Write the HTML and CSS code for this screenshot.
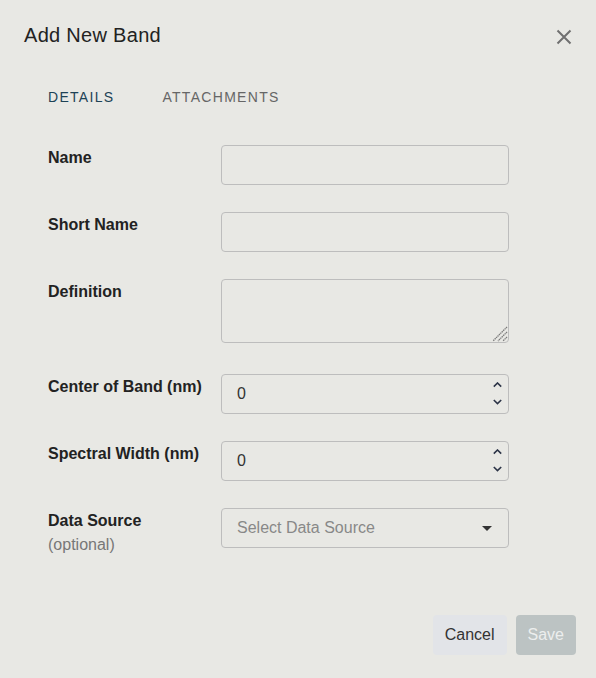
FILE: index.html
```html
<!DOCTYPE html>
<html lang="en">
<head>
    <meta charset="UTF-8">
    <meta name="viewport" content="width=device-width, initial-scale=1.0">
    <title>Add New Band</title>
    <link rel="stylesheet" href="styles.css">
</head>
<body>
    <div class="modal">
        <div class="header">
            <div class="title">Add New Band</div>
            <button class="close" aria-label="Close">
                <svg width="16" height="16" viewBox="0 0 16 16">
                    <path d="M1.5 1.5 L14.5 14.5 M14.5 1.5 L1.5 14.5" stroke="#707070" stroke-width="2" fill="none"/>
                </svg>
            </button>
        </div>

        <div class="tabs">
            <div class="tab active">DETAILS</div>
            <div class="tab">ATTACHMENTS</div>
        </div>

        <div class="form">
            <label class="label">Name</label>
            <div class="field"><input type="text" class="text-input"></div>

            <label class="label">Short Name</label>
            <div class="field"><input type="text" class="text-input"></div>

            <label class="label">Definition</label>
            <div class="textarea-wrap">
                <textarea class="textarea"></textarea>
                <svg class="grip" width="16" height="16" viewBox="0 0 16 16">
                    <path d="M15 1 L1 15 M15 6 L6 15 M15 11 L11 15" stroke="#7a7a7a" stroke-width="1.3" stroke-dasharray="1.4 0.6" fill="none"/>
                </svg>
            </div>

            <label class="label">Center of Band (nm)</label>
            <div class="field">
                <input type="text" class="text-input" value="0">
                <svg class="spinner" width="9" height="24" viewBox="0 0 9 24">
                    <path d="M0.8 4.6 L4.5 1 L8.2 4.6" stroke="#2c3447" stroke-width="1.6" fill="none"/>
                    <path d="M0.8 18 L4.5 21.6 L8.2 18" stroke="#2c3447" stroke-width="1.6" fill="none"/>
                </svg>
            </div>

            <label class="label">Spectral Width (nm)</label>
            <div class="field">
                <input type="text" class="text-input" value="0">
                <svg class="spinner" width="9" height="24" viewBox="0 0 9 24">
                    <path d="M0.8 4.6 L4.5 1 L8.2 4.6" stroke="#2c3447" stroke-width="1.6" fill="none"/>
                    <path d="M0.8 18 L4.5 21.6 L8.2 18" stroke="#2c3447" stroke-width="1.6" fill="none"/>
                </svg>
            </div>

            <label class="label">Data Source<span class="optional">(optional)</span></label>
            <div class="field select">
                <span class="placeholder">Select Data Source</span>
                <svg class="caret" width="10" height="5" viewBox="0 0 10 5">
                    <path d="M0 0 L10 0 L5 5 Z" fill="#333"/>
                </svg>
            </div>
        </div>

        <div class="footer">
            <button class="btn btn-cancel">Cancel</button>
            <button class="btn btn-save" disabled>Save</button>
        </div>
    </div>
</body>
</html>
```

FILE: styles.css
```css
body {
    margin: 0;
    width: 596px;
    height: 678px;
    background-color: #e8e8e4;
    font-family: "Liberation Sans", Arial, sans-serif;
    color: #222;
    overflow: hidden;
}
.modal {
    display: flex;
    flex-direction: column;
    height: 100%;
    box-sizing: border-box;
    padding: 23px 20px 23px 24px;
}
.header {
    display: flex;
    justify-content: space-between;
    align-items: center;
    height: 24px;
}
.title {
    font-size: 20px;
    line-height: 24px;
    letter-spacing: 0.3px;
    color: #222;
}
.close {
    border: none;
    background: none;
    padding: 0;
    margin-right: 4px;
    margin-top: 4px;
    width: 16px;
    height: 16px;
    cursor: pointer;
}
.tabs {
    display: flex;
    margin-top: 40px;
}
.tab {
    padding: 0 24px;
    font-size: 14px;
    line-height: 20px;
    letter-spacing: 1.3px;
    color: #666;
}
.tab.active {
    color: #1d4256;
}
.form {
    display: grid;
    grid-template-columns: 173px 288px;
    row-gap: 27px;
    margin-top: 38px;
    padding-left: 24px;
}
.label {
    display: flex;
    flex-direction: column;
    padding-top: 1px;
    font-size: 16px;
    line-height: 24px;
    font-weight: bold;
    color: #222;
}
.optional {
    font-weight: normal;
    color: #777;
}
.field {
    display: flex;
    align-items: center;
    height: 40px;
    box-sizing: border-box;
    border: 1px solid #bdbdbd;
    border-radius: 4px;
    padding: 0 6px 0 15px;
}
.text-input {
    flex: 1;
    min-width: 0;
    border: none;
    outline: none;
    background: transparent;
    padding: 0;
    font-family: "Liberation Sans", Arial, sans-serif;
    font-size: 16px;
    color: #333;
}
.spinner {
    margin-left: 4px;
}
.textarea-wrap {
    position: relative;
    height: 64px;
    margin-bottom: 4px;
}
.textarea {
    display: block;
    width: 100%;
    height: 64px;
    box-sizing: border-box;
    border: 1px solid #bdbdbd;
    border-radius: 4px;
    background: transparent;
    padding: 8px 15px;
    font-family: "Liberation Sans", Arial, sans-serif;
    font-size: 16px;
    resize: none;
    outline: none;
}
.grip {
    position: absolute;
    right: 1px;
    bottom: 1px;
    pointer-events: none;
}
.select {
    justify-content: space-between;
    padding-right: 16px;
}
.placeholder {
    font-size: 16px;
    color: #888;
}
.footer {
    display: flex;
    justify-content: flex-end;
    gap: 9px;
    margin-top: auto;
}
.btn {
    height: 40px;
    padding: 0 12px;
    border: none;
    border-radius: 4px;
    font-family: "Liberation Sans", Arial, sans-serif;
    font-size: 16px;
    cursor: pointer;
}
.btn-cancel {
    background-color: #e2e4e8;
    color: #333;
}
.btn-save {
    background-color: #bcc3c3;
    color: #eceeee;
    cursor: not-allowed;
}
```
